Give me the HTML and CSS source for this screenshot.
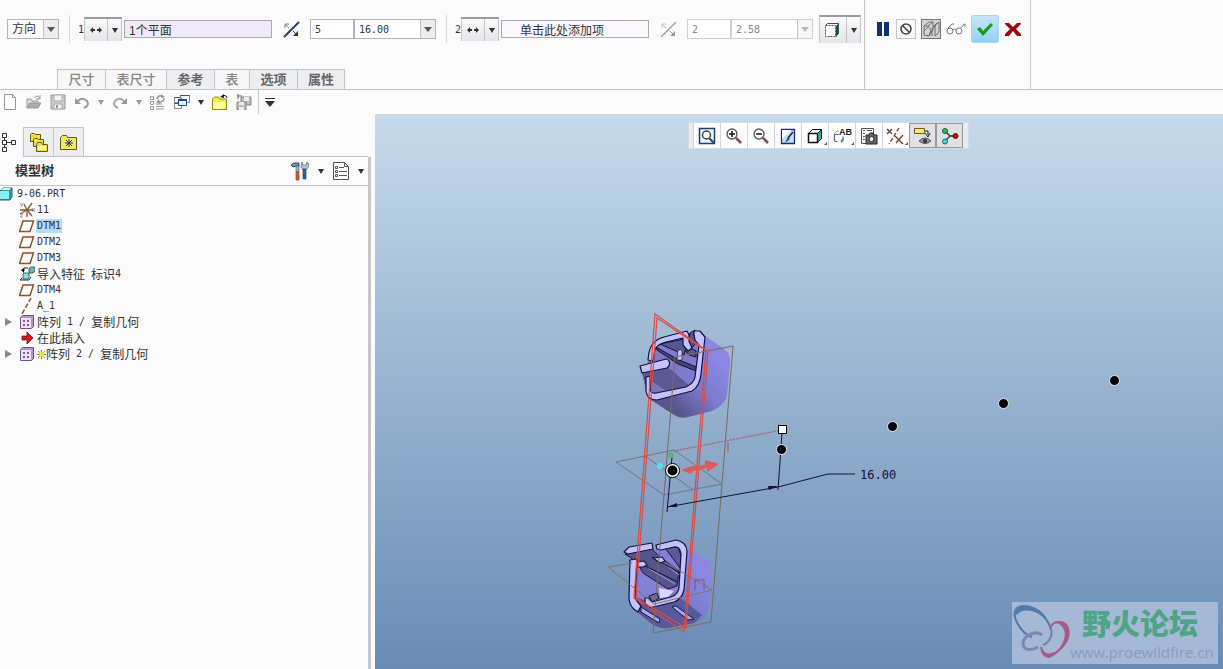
FILE: index.html
```html
<!DOCTYPE html>
<html lang="zh-CN">
<head>
    <meta charset="UTF-8">
    <title>9-06.PRT</title>
    <link rel="stylesheet" href="styles.css">
</head>
<body>

    <header class="ribbon">
        <div class="dashboard">
            <form class="controls">
                <div class="combo type">
                    <select aria-label="类型"><option>方向</option></select>
                </div>
                <span class="sep"></span>
                <div class="group">
                    <label class="num" for="ref1">1</label>
                    <div class="split">
                        <button type="button" aria-label="平移 1"><svg width="14" height="8" viewBox="0 0 14 8"><path d="M1 4l3-3v6zM13 4l-3-3v6z" fill="#333"/><path d="M4 4h2M8 4h2" stroke="#333" stroke-width="2"/></svg></button>
                        <button type="button" class="drop" aria-label="选择平移 1"><i class="arrow"></i></button>
                    </div>
                    <input id="ref1" class="collector filled" type="text" value="1个平面">
                </div>
                <button type="button" class="icon" aria-label="反向 1"><svg width="18" height="18" viewBox="0 0 18 18"><path d="M2 17L17 2" stroke="#26406e" stroke-width="2"/><path d="M3 8V4h4M4 5l3 3" stroke="#777" fill="none"/><path d="M11 11l4 4" stroke="#333"/><path d="M16 11v5h-5z" fill="#333"/></svg></button>
                <div class="group pair">
                    <input class="count" type="text" value="5" aria-label="成员数 1">
                    <div class="combo value"><select aria-label="间距 1"><option>16.00</option></select></div>
                </div>
                <span class="sep"></span>
                <div class="group">
                    <label class="num" for="ref2">2</label>
                    <div class="split">
                        <button type="button" aria-label="平移 2"><svg width="14" height="8" viewBox="0 0 14 8"><path d="M1 4l3-3v6zM13 4l-3-3v6z" fill="#333"/><path d="M4 4h2M8 4h2" stroke="#333" stroke-width="2"/></svg></button>
                        <button type="button" class="drop" aria-label="选择平移 2"><i class="arrow"></i></button>
                    </div>
                    <input id="ref2" class="collector hint" type="text" value="单击此处添加项">
                </div>
                <button type="button" class="icon" aria-label="反向 2" disabled><svg width="18" height="18" viewBox="0 0 18 18"><path d="M2 17L17 2" stroke="#999" stroke-width="1.3"/><path d="M3 8V4h4M4 5l3 3" stroke="#bbb" fill="none"/><path d="M11 11l4 4" stroke="#999"/><path d="M16 11v5h-5z" fill="#999"/></svg></button>
                <div class="group pair">
                    <input class="count" type="text" value="2" aria-label="成员数 2" disabled>
                    <div class="combo value off"><select aria-label="间距 2" disabled><option>2.58</option></select></div>
                </div>
                <div class="split big">
                    <button type="button" aria-label="再生选项"><svg width="18" height="16" viewBox="0 0 18 16"><path d="M12 4l3-3v10l-3 4z" fill="#1f4a4a"/><path d="M1.500 3.500l2-2h11v10l-3 3" fill="none" stroke="#355"/><path d="M1.500 3.500h10v11h-10z" fill="#fff" stroke="#555" stroke-dasharray="2 1"/></svg></button>
                    <button type="button" class="drop" aria-label="更多再生选项"><i class="arrow"></i></button>
                </div>
            </form>
            <nav class="tabs">
                <button type="button" class="w2" disabled>尺寸</button>
                <button type="button" class="w3" disabled>表尺寸</button>
                <button type="button" class="w2">参考</button>
                <button type="button" class="w1" disabled>表</button>
                <button type="button" class="w2">选项</button>
                <button type="button" class="w2">属性</button>
            </nav>
        </div>
        <div class="confirm">
            <button type="button" class="icon" aria-label="暂停"><svg width="18" height="18" viewBox="0 0 18 18"><path d="M4 2h5v14H4zM11 2h5v14h-5z" fill="#123078"/></svg></button>
            <button type="button" class="icon boxed" aria-label="无预览"><svg width="14" height="14" viewBox="0 0 14 14"><circle cx="7" cy="7" r="5" fill="none" stroke="#444" stroke-width="1.600"/><path d="M3.500 3.500l7 7" stroke="#444" stroke-width="1.600"/></svg></button>
            <button type="button" class="icon boxed pressed" aria-label="分离预览"><svg width="18" height="18" viewBox="0 0 18 18"><path d="M2 6l5-4h4l-5 4zM2 6v9l5 1 8-13M6 6l3 4-2 6M11 2v5M13 5l4-3v10l-4 4zM13 5l-3 3v8M2 11l4-4" fill="none" stroke="#555" stroke-width=".8"/></svg></button>
            <button type="button" class="icon" aria-label="校验"><svg width="20" height="14" viewBox="0 0 20 14"><g fill="none" stroke="#777"><circle cx="4" cy="9" r="3"/><circle cx="13" cy="9" r="3"/><path d="M7 8q1.500-2 3 0M2 6l4-4h2M15 6l3-4h1v3"/></g></svg></button>
            <button type="button" class="ok" aria-label="确定"><svg width="20" height="18" viewBox="0 0 20 18"><path d="M2 9l3-2 3 4L16 3l2 2L8 16z" fill="#149a1e"/></svg></button>
            <button type="button" class="icon" aria-label="取消"><svg width="18" height="18" viewBox="0 0 18 18"><path d="M1 3h4l4 4 4-4h4v1l-5 5 5 5v2h-4l-4-5-4 5H1v-2l5-5-5-5z" fill="#9b0710"/></svg></button>
        </div>
    </header>

    <div class="quickbar">
        <button type="button" aria-label="新建"><svg width="16" height="16" viewBox="0 0 16 16"><path d="M2.500.500h8l3 3v12h-11zM10.500.500v3h3" fill="#fff" stroke="#999"/></svg></button>
        <button type="button" aria-label="打开"><svg width="16" height="16" viewBox="0 0 16 16"><path d="M1 14V5h4l1 2h6v2" fill="#ddd" stroke="#999"/><path d="M1 14l3-5h11l-3 5z" fill="#aaa" stroke="#999"/><path d="M8 4q3-4 6 0M14 1v4h-4" fill="none" stroke="#999"/></svg></button>
        <button type="button" aria-label="保存"><svg width="16" height="16" viewBox="0 0 16 16"><path d="M1 1h14v14H1z" fill="#ccc" stroke="#999"/><path d="M4 1h8v6H4z" fill="#f4f4f4" stroke="#aaa"/><path d="M4 10h8v5H4z" fill="#f4f4f4" stroke="#aaa"/><path d="M6 11h2v3H6z" fill="#999"/></svg></button>
        <button type="button" aria-label="撤消"><svg width="16" height="16" viewBox="0 0 16 16"><path d="M3 8q5-6 10-1 3 4-3 7" fill="none" stroke="#999" stroke-width="2"/><path d="M1 4v6h6z" fill="#999"/></svg></button>
        <button type="button" aria-label="撤消列表"><i class="arrow pale"></i></button>
        <button type="button" aria-label="重做"><svg width="16" height="16" viewBox="0 0 16 16"><path d="M13 8Q8 2 3 7q-3 4 3 7" fill="none" stroke="#aaa" stroke-width="2"/><path d="M15 4v6H9z" fill="#999"/></svg></button>
        <button type="button" aria-label="重做列表"><i class="arrow pale"></i></button>
        <button type="button" aria-label="再生"><svg width="16" height="16" viewBox="0 0 16 16"><path d="M.500 2.500h3v3h-3zM.500 7.500h3v3h-3zM.500 12.500h3v3h-3zM6 10h6M6 12.500h8M6 15h8" fill="none" stroke="#999"/><path d="M7 5q1-4 5-3M14 4q0 4-5 4" fill="none" stroke="#999" stroke-width="1.500"/><path d="M11 0l4 3-4 1zM9 5L6 8l4 2z" fill="#999"/></svg></button>
        <button type="button" aria-label="窗口"><svg width="16" height="16" viewBox="0 0 16 16"><path d="M6.500 1.500h9v7h-9zM.500 3.500h7v5h-7zM.500 9.500h7v5h-7z" fill="#fff" stroke="#888"/><path d="M6 1.500h10M0 3.500h6M0 9.500h4" stroke="#555"/><path d="M4.500 5.500h8v6h-8z" fill="#e8f0ff" stroke="#1d4b9b"/><path d="M4 6h9" stroke="#1d4b9b" stroke-width="2"/></svg></button>
        <button type="button" aria-label="窗口列表"><i class="arrow"></i></button>
        <button type="button" aria-label="工作目录"><svg width="16" height="16" viewBox="0 0 16 16"><path d="M.500 15.500V5l2-2h4l1 2h7v10.500z" fill="#f5ee4a" stroke="#8f8a1c"/><path d="M1 8h13v4l-4 3H1z" fill="#fffca0"/><path d="M9 3q3-3 5-1 1 1 1 2" fill="none" stroke="#222"/><path d="M8 3l4-3v4z" fill="#222"/></svg></button>
        <button type="button" aria-label="保存副本"><svg width="16" height="16" viewBox="0 0 16 16"><path d="M5 3h10v8H5z" fill="#bbb" stroke="#888"/><path d="M8 3h5v4H8z" fill="#eee"/><path d="M1 8h9v8H1z" fill="#bbb" stroke="#888"/><path d="M3 8h5v3H3zM3 13h5v3H3z" fill="#eee"/><path d="M1 2h5M2 0v5" stroke="#666"/></svg></button>
        <span class="sep"></span>
        <button type="button" class="custom" aria-label="自定义"><i class="arrow wide"></i></button>
    </div>

    <main class="work">
        <aside class="panel">
            <div class="panel-tabs">
                <button type="button" class="on" aria-label="模型树"><svg width="16" height="20" viewBox="0 0 16 20"><path d="M1.500 1.500h4v4h-4zM1.500 8.500h4v4h-4zM1.500 15.500h4v4h-4zM10.500 8.500h4v4h-4zM3.500 6v2M3.500 13v2M6 10.500h4" fill="none" stroke="#333"/></svg></button>
                <button type="button" aria-label="文件夹浏览器"><svg width="20" height="20" viewBox="0 0 20 20"><g fill="#f0e23c" stroke="#5e5a1c"><path d="M1.500 9.500v-7l1-1h3l1 1h5v7z"/><path d="M4.500 14.500v-7l1-1h3l1 1h5v7z"/><path d="M7.500 19.500v-7l1-2h4l1 2h5v7z"/></g><path d="M9 14h8v3l-2 1H9z" fill="#fff9a0"/></svg></button>
                <button type="button" aria-label="收藏夹"><svg width="18" height="16" viewBox="0 0 18 16"><path d="M.500 15.500v-12l2-2h4l1 2h9v12z" fill="#f7ea57" stroke="#5e5a1c"/><path d="M9 5v8M5 9h8M6 6l6 6M12 6l-6 6" stroke="#15347f"/></svg></button>
            </div>
            <div class="panel-body">
                <div class="panel-head">
                    <h1>模型树</h1>
                    <button type="button" aria-label="设置"><svg width="20" height="20" viewBox="0 0 20 20"><path d="M1 4l3-2h5v3H6L3 6z" fill="#5ca6c6" stroke="#345"/><path d="M6 5h3v6H6z" fill="#a8b4bc" stroke="#456" stroke-width=".6"/><path d="M6 11h3v8H6z" fill="#e2581e" stroke="#733" stroke-width=".6"/><path d="M12 1l1 3h3l1-3 2 2-1 4-2 2h-3l-2-3z" fill="#b7c4cc" stroke="#566" stroke-width=".7"/><path d="M13 8h3v10h-3z" fill="#2966ae" stroke="#234" stroke-width=".6"/></svg></button>
                    <button type="button" aria-label="设置列表"><i class="arrow"></i></button>
                    <button type="button" aria-label="显示"><svg width="18" height="20" viewBox="0 0 18 20"><path d="M1.500 1.500h11l4 4v13h-15zM12.500 1.500v4h4" fill="#fff" stroke="#555"/><path d="M7 6.500h5M7 10.500h8M7 14.500h8" stroke="#555"/><path d="M3.500 5.500h2v2h-2zM3.500 9.500h2v2h-2zM3.500 13.500h2v2h-2z" fill="none" stroke="#555"/></svg></button>
                    <button type="button" aria-label="显示列表"><i class="arrow"></i></button>
                </div>
                <ul class="tree">
                    <li class="root"><svg width="14" height="14" viewBox="0 0 14 14"><path d="M0 4l3-3h9v9l-2 3H0z" fill="#3b97a0" stroke="#266"/><path d="M0 4h9v8H0z" fill="#86f0f0"/><path d="M1 3l2-2h8L9 3z" fill="#c9ffff"/></svg>9-06.PRT</li>
                    <li><svg width="16" height="16" viewBox="0 0 16 16"><path d="M1 8h14M8 8l5-7M8 8L5 2M8 8l5 6M8 8v7M8 8l-7 4" stroke="#8b5a38" stroke-width="1.300"/><path d="M1 1l2 3M4 1L2 5M13 6l3 4M16 6l-3 4M1 12h3l-3 3h3" fill="none" stroke="#888" stroke-width=".8"/></svg>11</li>
                    <li><svg width="16" height="16" viewBox="0 0 16 16"><path d="M.500 13.500L4 3h10.500L11 13.500z" fill="none" stroke="#8b5229" stroke-width="1.500"/></svg><b>DTM1</b></li>
                    <li><svg width="16" height="16" viewBox="0 0 16 16"><path d="M.500 13.500L4 3h10.500L11 13.500z" fill="none" stroke="#8b5229" stroke-width="1.500"/></svg>DTM2</li>
                    <li><svg width="16" height="16" viewBox="0 0 16 16"><path d="M.500 13.500L4 3h10.500L11 13.500z" fill="none" stroke="#8b5229" stroke-width="1.500"/></svg>DTM3</li>
                    <li><svg width="16" height="16" viewBox="0 0 16 16"><path d="M10 2l2-1h4v4l-2 2h-4z" fill="#67b7bb" stroke="#233" stroke-width=".7"/><path d="M4 8l1-1h5v5l-1 1H4z" fill="#7fe0e6" stroke="#233" stroke-width=".7"/><path d="M1 14h9l2-3M1 14l2-2M9 2H5v3" fill="none" stroke="#222"/><path d="M2 4l3-2v5z" fill="#111"/></svg><span>导入特征</span><em> </em><span>标识</span>4</li>
                    <li><svg width="16" height="16" viewBox="0 0 16 16"><path d="M.500 13.500L4 3h10.500L11 13.500z" fill="none" stroke="#8b5229" stroke-width="1.500"/></svg>DTM4</li>
                    <li><svg width="16" height="16" viewBox="0 0 16 16"><path d="M3 16L12 0" stroke="#8b5229" stroke-width="1.500" stroke-dasharray="5 2"/></svg>A_1</li>
                    <li class="closed"><svg width="16" height="16" viewBox="0 0 16 16"><path d="M1.500 3.500l2-2h11v11l-2 2h-11z" fill="#b597cc" stroke="#6d5488"/><path d="M2 4h10v10H2z" fill="#f1e0fa"/><path d="M4 6h2v2H4zM8 6h2v2H8zM4 10h2v2H4zM8 10h2v2H8z" fill="#81619d"/></svg><span>阵列</span> 1 / <span>复制几何</span></li>
                    <li><svg width="16" height="16" viewBox="0 0 16 16"><path d="M3 6h5V2l6 6-6 6v-4H3z" fill="#d6141b" stroke="#701"  stroke-width=".7"/></svg><span>在此插入</span></li>
                    <li class="closed"><svg width="16" height="16" viewBox="0 0 16 16"><path d="M1.500 3.500l2-2h11v11l-2 2h-11z" fill="#b597cc" stroke="#6d5488"/><path d="M2 4h10v10H2z" fill="#f1e0fa"/><path d="M4 6h2v2H4zM8 6h2v2H8zM4 10h2v2H4zM8 10h2v2H8z" fill="#81619d"/></svg><svg class="star" width="9" height="9" viewBox="0 0 8 8"><path d="M4 0v8M0 4h8M1 1l6 6M7 1L1 7" stroke="#77701a" stroke-width=".8"/><path d="M2 2h4v4H2z" fill="#f1ea2a"/></svg><span>阵列</span> 2 / <span>复制几何</span></li>
                </ul>
            </div>
        </aside>

        <section class="view">
            <svg class="scene" viewBox="375 114 848 555" role="img" aria-label="9-06.PRT">
                <defs>
                    <linearGradient id="shade" x1="0.900" y1="0.400" x2="0.400" y2="0.900">
                        <stop offset="0" stop-color="#8a86e2"/>
                        <stop offset=".5" stop-color="#7c7bce"/>
                        <stop offset="1" stop-color="#56568f"/>
                    </linearGradient>
                </defs>

                <!-- upper part -->
                <g stroke-linejoin="round">
                    <path d="M698 331L724 349Q731 354 730 364L727 395Q725 405 712 411L688 417Q680 419 674 415L648 398 642 373 660 341z" fill="url(#shade)"/>
                    <path d="M656 346L698 337 696 382 654 395z" fill="#7d7bce"/>
                    <path d="M644 373L668 367 691 387 656 395 650 391 650 380z" fill="#5a5a96"/>
                    <path d="M651 381L670 393 655 396 650 392z" fill="#7674c2"/>
                    <path d="M660 344L684 339 686 348 684 355 676 351z" fill="#57578f" stroke="#11113a"/>
                    <path d="M656 347L677 359 696 367V371L678 364 657 350z" fill="#45456f" stroke="#11113a"/>
                    <path d="M685 350l6-2 5 3v6l-7-2z" fill="#57578f" stroke="#11113a"/>
                    <path d="M690 333l5-3v14l-4 5-5-3z" fill="#55558c" stroke="#11113a"/>
                    <path d="M678 350h4v10h-5z" fill="#c9c6fb" stroke="#11113a" stroke-width=".6"/>
                    <g fill="#c5c2fb" stroke="#11113a" stroke-width="1.200">
                        <path d="M648 360Q649 349 652 345 656 339 664 337L687 331 689 335V341L692 348 688 351 683 345V338L666 342Q658 344 655 349L653 361z"/>
                        <path d="M694 334V331L700 331 705 337 701 374Q700 386 692 391L657 400Q647 400 646 391V377L650 376V389Q651 394 656 393L686 387Q694 383 695 377L699 345 695 340z"/>
                        <path d="M640 366L666 359Q671 360 669 366L667 368 642 373z"/>
                    </g>
                </g>

                <!-- lower part -->
                <g stroke-linejoin="round">
                    <path d="M684 546L706 559Q713 564 712 572L708 610Q706 619 694 623L668 628Q660 629 652 624L632 608 632 560 665 545z" fill="url(#shade)"/>
                    <path d="M637 562L680 548 680 590 650 603 636 597z" fill="#8381d6"/>
                    <path d="M665 548L678 547 681 556 680 568z" fill="#5a5a98" stroke="#171743"/>
                    <path d="M625 554L652 549 660 557 679 571 677 586 668 589 643 573 637 562z" fill="#55558c" stroke="#171743"/>
                    <path d="M648 568L675 584M662 562L679 575" fill="none" stroke="#9a98e4"/>
                    <path d="M645 566L678 582M652 557L680 573" fill="none" stroke="#11113a"/>
                    <path d="M638 608L682 599 702 615 694 623 668 628 652 624z" fill="#58589a"/>
                    <path d="M672 607l4-1 18 13-6 1zM641 607l19 12-1 4-18-11z" fill="#a9a6ee" stroke="#171743"/>
                    <path d="M659 588L674 591 668 597 660 598z" fill="#dad8ff"/>
                    <path d="M649 596l8-3 2 5-7 4z" fill="#6c6a9c" stroke="#11113a"/>
                    <g fill="#c5c2fb" stroke="#11113a" stroke-width="1.200">
                        <path d="M630 560L637 559 635 598Q637 602 641 606L638 612Q629 607 629 598z"/>
                        <path d="M656 545L676 540Q687 542 687 552L684 590Q682 599 674 602L649 608 645 604V598H649L652 602 671 597Q679 594 679 587L681 554Q680 546 674 547L661 550 657 549z"/>
                        <path d="M624 552L629 547 652 543 653 549 628 554z"/>
                        <path d="M637 562l7-1 3 4-4 2-6 0zM653 558l9-1 3 4-5 2z"/>
                    </g>
                </g>

                <!-- datum planes -->
                <g fill="none" stroke="#7d6a58">
                    <path d="M675 357L733 346 711 622 653 633z"/>
                    <path d="M616 462L674 450 722 484 664 495zM645 456L692 489" stroke="#75757c"/>
                    <path d="M632 563L608 567 654 604 712 590 665 562" stroke="#857463"/>
                    <path d="M695 590V580H704V590" stroke="#6a5a8c"/>
                </g>
                <g fill="none" stroke="#dc4a44" stroke-width="1.200">
                    <path d="M655 314L706 350 684 632 634 598z"/>
                    <path d="M657 318L708 352 686 628 636 598z"/>
                    <path d="M674 451L782 430" stroke="#a35e74" stroke-dasharray="2 1"/>
                    <path d="M728 442V452" stroke="#a35e74"/>
                </g>

                <!-- dimension -->
                <path d="M672 457L667 512M782 433L778 490M667 507L778 487 828 474H855" fill="none" stroke="#11113a"/>
                <path d="M667 507l10-4v4zM778 486l-10 0 1 4z" fill="#11113a"/>
                <text class="dim" x="860" y="479">16.00</text>

                <path d="M681 470l11-4 13-1v-5l14 4-12 8v-4l-14 3-2 3z" fill="#dc5a58"/>
                <circle cx="660" cy="466" r="3" fill="#4be6f5"/>
                <circle cx="671" cy="455" r="3" fill="#56b575"/>
                <circle cx="672.500" cy="470.500" r="7" fill="#fff" stroke="#000"/>
                <circle cx="672.500" cy="470.500" r="5"/>
                <path d="M778.500 425.500h8v8h-8z" fill="#fff" stroke="#000"/>
                <g stroke="#e8eef5">
                    <circle cx="781.500" cy="449.500" r="5"/>
                    <circle cx="892.500" cy="426.500" r="5"/>
                    <circle cx="1003.500" cy="403.500" r="5"/>
                    <circle cx="1114.500" cy="380.500" r="5"/>
                </g>
            </svg>

            <div class="viewbar">
                <button type="button" aria-label="重新调整"><svg width="18" height="18" viewBox="0 0 18 18"><path d="M1.500 1.500h15v15h-15z" fill="#eef4ff" stroke="#1f3c78" stroke-width="1.500"/><circle cx="8.500" cy="8" r="4" fill="#fff" stroke="#444" stroke-width="1.500"/><path d="M11 11l5 5" stroke="#444" stroke-width="2"/></svg></button>
                <button type="button" aria-label="放大"><svg width="18" height="18" viewBox="0 0 18 18"><circle cx="7" cy="7" r="5" fill="#fff" stroke="#555" stroke-width="1.300"/><path d="M4 7h6M7 4v6" stroke="#111" stroke-width="1.500"/><path d="M11 11l5 5" stroke="#7a5146" stroke-width="2.500"/></svg></button>
                <button type="button" aria-label="缩小"><svg width="18" height="18" viewBox="0 0 18 18"><circle cx="7" cy="7" r="5" fill="#fff" stroke="#555" stroke-width="1.300"/><path d="M4 7h6" stroke="#111" stroke-width="1.500"/><path d="M11 11l5 5" stroke="#7a5146" stroke-width="2.500"/></svg></button>
                <button type="button" aria-label="重画"><svg width="18" height="18" viewBox="0 0 18 18"><path d="M2.500 2.500h13v14h-13z" fill="#c7dcfa" stroke="#16336f" stroke-width="1.300"/><path d="M3 3h9L3 12z" fill="#fff"/><path d="M14 5l-5 6" stroke="#222" stroke-width="1.500"/><path d="M9 10l2 2-5 4z" fill="#26426e"/></svg></button>
                <button type="button" class="more" aria-label="显示样式"><svg width="18" height="18" viewBox="0 0 18 18"><path d="M2.500 6.500l4-4h9v9l-4 4z" fill="#38ae98" stroke="#111"/><path d="M2.500 6.500l4-4h9l-4 4z" fill="#fff" stroke="#111"/><path d="M2.500 6.500h9v9h-9z" fill="#fff" stroke="#111" stroke-width="1.500"/></svg></button>
                <button type="button" class="more" aria-label="命名视图"><svg width="20" height="18" viewBox="0 0 20 18"><path d="M2.500 14V7.500h4M2.500 14.500h3M11 9.500v4l-2 2" fill="none" stroke="#667" stroke-width="1.200"/><path d="M2 7l3-3h2" fill="none" stroke="#999"/><path d="M8 14l4-4v4z" fill="#55a7a0"/><text class="ab" x="7" y="8">AB</text></svg></button>
                <button type="button" aria-label="视图管理器"><svg width="18" height="18" viewBox="0 0 18 18"><path d="M1.500 1.500h12v15h-12z" fill="#fff" stroke="#555"/><path d="M3 3.500h2M7 3.500h5M3 6.500h2M3 9.500h2M3 12.500h2" stroke="#555"/><path d="M6 8h3l1-2h3l1 2h3v9H6z" fill="#666" stroke="#222"/><circle cx="11.500" cy="12" r="2.500" fill="#fff" stroke="#222"/></svg></button>
                <button type="button" class="more" aria-label="基准显示"><svg width="20" height="18" viewBox="0 0 20 18"><g stroke="#6e3c2a" stroke-width="1.300"><path d="M1 2l5 5M6 2L1 7M9 9l8 8M17 8l-7 8"/><path d="M13 1L3 17" stroke-dasharray="4 2"/></g></svg></button>
                <button type="button" class="down" aria-label="注释显示"><svg width="20" height="18" viewBox="0 0 20 18"><path d="M1.500 1.500h10v5h-10z" fill="#f6ec6d" stroke="#665e1a"/><path d="M12 4h3v4M12 6l3 4 2-4" fill="none" stroke="#222"/><path d="M6 14q6-6 12 0-6 5-12 0z" fill="#999" stroke="#555"/><circle cx="12" cy="14" r="2" fill="#333"/></svg></button>
                <button type="button" class="down" aria-label="旋转中心"><svg width="18" height="18" viewBox="0 0 18 18"><path d="M4 4l5 5h5M9 9l-5 5" fill="none" stroke="#333" stroke-width="1.300"/><circle cx="4" cy="4" r="2.500" fill="#2ebc4a" stroke="#164"/><circle cx="14.500" cy="9" r="2.500" fill="#b91822" stroke="#611"/><circle cx="4" cy="14.500" r="2.500" fill="#4fd2d8" stroke="#266"/></svg></button>
            </div>

            <div class="watermark">
                <svg width="58" height="58" viewBox="0 0 58 58" fill="none">
                    <path d="M20 35C8 31-2 12 5 6c10-7 31 7 34 22" stroke="#5379a8" stroke-width="2"/>
                    <path d="M4 12C7-1 26 4 34 17 26 7 11 4 4 12z" fill="#5379a8" stroke="#5379a8" stroke-width="2"/>
                    <path d="M39 25c2-6 12-7 16 1 3 10-4 22-18 29-5 0-7-4-8-10" stroke="#a75b83" stroke-width="2"/>
                    <path d="M46 20c14-1 14 18 2 27 7-9 9-21-2-27zM30 48q4 7 12 3-6 7-12-3z" fill="#a75b83" stroke="#a75b83" stroke-width="2"/>
                    <path d="M30 33c-6-5-18 0-19 8 0 6 6 9 15 4" stroke="#7989b1" stroke-width="3"/>
                    <path d="M39 27c2 6-2 14-8 16" stroke="#6f85ae" stroke-width="2"/>
                </svg>
                <div class="site"><strong>野火论坛</strong><span>www.proewildfire.cn</span></div>
            </div>
        </section>
    </main>

</body>
</html>
```
FILE: styles.css
```css
* {
    box-sizing: border-box;
}

body {
    margin: 0;
    min-height: 100vh;
    display: flex;
    flex-direction: column;
    background-color: #fbfbfb;
    color: #333;
    font-family: "DejaVu Sans Mono", "Noto Sans CJK SC", monospace;
    font-size: 12px;
}

button, input, select {
    margin: 0;
    padding: 0;
    border: 0;
    background: none;
    color: inherit;
    font-family: "Liberation Sans", "Noto Sans CJK SC", sans-serif;
    font-size: 12px;
}

svg {
    display: block;
    flex: none;
}

.arrow {
    display: block;
    border: 3px solid transparent;
    border-top: 5px solid #333;
    border-bottom: 0;
}

.arrow.pale {
    border-top-color: #999;
}

.arrow.wide {
    position: relative;
    border-width: 6px 5px 0;
}

.arrow.wide::before {
    content: "";
    position: absolute;
    left: -5px;
    top: -9px;
    width: 10px;
    height: 1px;
    background-color: #333;
}

/* ribbon */
.ribbon {
    display: flex;
    border-bottom: 1px solid #c3c3c8;
}

.dashboard {
    padding-right: 3px;
    border-right: 1px solid #c3c3c8;
}

.controls {
    display: flex;
    align-items: center;
    gap: 10px;
    height: 58px;
    padding-left: 7px;
}

.sep {
    width: 1px;
    height: 28px;
    background-color: #d8d8dc;
}

.group {
    display: flex;
    align-items: center;
    gap: 2px;
}

.group.pair {
    gap: 0;
}

.num {
    width: 6px;
    margin-left: -2px;
    margin-right: -2px;
    font-size: 10px;
}

.combo {
    position: relative;
    height: 20px;
    border: 1px solid #b3b3bb;
    background-color: #fff;
}

.combo.type {
    width: 52px;
    background-color: #fbfbfb;
}

.combo.value {
    width: 82px;
}

.combo select {
    appearance: none;
    width: 100%;
    height: 18px;
    padding-left: 4px;
}

.combo.value select, .count {
    font-family: "DejaVu Sans Mono", monospace;
    font-size: 10px;
}

.combo::before {
    content: "";
    position: absolute;
    right: 0;
    top: 0;
    width: 14px;
    height: 18px;
    border-left: 1px solid #c3c3c8;
    background-color: #ededf0;
    pointer-events: none;
}

.combo::after {
    content: "";
    position: absolute;
    right: 3px;
    top: 7px;
    border: 4px solid transparent;
    border-top: 5px solid #555;
    border-bottom: 0;
    pointer-events: none;
}

.combo.off {
    border-color: #cfcfd4;
    color: #888;
}

.combo.off select, .count:disabled {
    color: #888;
    opacity: 1;
}

.combo.off::before {
    background-color: #f7f7f8;
}

.combo.off::after {
    border-top-color: #bbb;
}

.count {
    width: 44px;
    height: 20px;
    padding-left: 4px;
    border: 1px solid #b3b3bb;
    background-color: #fff;
}

.count:disabled {
    border-color: #cfcfd4;
}

.collector {
    width: 148px;
    height: 18px;
    padding-left: 4px;
    border: 1px solid #a9a9b0;
}

.collector.filled {
    background-color: #efe9fa;
}

.collector.hint {
    padding-left: 18px;
    background-color: #faf7ff;
}

.split {
    display: flex;
    width: 38px;
    height: 24px;
    border: 1px solid #c3c3c8;
    border-top: 2px solid #9a9aa0;
    border-bottom: 0;
    background-image: linear-gradient(#fbfbfb, #e4e4ea);
}

.split button {
    flex: 1;
    display: flex;
    align-items: center;
    justify-content: center;
}

.split .drop {
    flex: none;
    width: 14px;
    border-left: 1px solid #c3c3c8;
}

.split.big {
    width: 42px;
    height: 28px;
    margin-left: -4px;
}

.icon {
    display: flex;
    align-items: center;
    justify-content: center;
    min-width: 18px;
    height: 20px;
}

.tabs {
    display: flex;
    margin-top: 11px;
    padding-left: 57px;
}

.tabs button {
    height: 20px;
    border: 1px solid #c3c3c8;
    border-right-width: 0;
    border-bottom: 0;
    background-color: #eceef1;
    color: #666;
    font-size: 13px;
    font-weight: bold;
    line-height: 18px;
}

.tabs button:disabled {
    background-color: #f7f7f8;
    color: #858585;
    font-weight: 500;
}

.tabs button:last-child {
    border-right-width: 1px;
}

.tabs .w1 {
    width: 35px;
}

.tabs .w2 {
    width: 48px;
}

.tabs .w3 {
    width: 61px;
}

.confirm {
    display: flex;
    align-items: center;
    gap: 5px;
    height: 89px;
    padding: 0 8px 31px;
    border-right: 1px solid #c3c3c8;
}

.confirm .boxed {
    width: 20px;
    border: 1px solid #c3c3c8;
}

.confirm .pressed {
    border-color: #777;
    background-color: #d2d2d6;
}

.ok {
    display: flex;
    align-items: center;
    justify-content: center;
    width: 28px;
    height: 28px;
    border: 1px solid #a8d6f2;
    border-radius: 2px;
    background-image: linear-gradient(#c6e6fa, #93cff5);
}

/* quick access */
.quickbar {
    display: flex;
    align-items: center;
    gap: 8px;
    height: 24px;
    padding-left: 2px;
}

.quickbar .sep {
    height: 24px;
    margin: 0 -2px;
    background-color: #c3c3c8;
}

.custom {
    padding-top: 4px;
}

/* model tree */
.work {
    flex: 1;
    display: flex;
}

.panel {
    display: flex;
    flex-direction: column;
    width: 375px;
    padding: 13px 4px 0 0;
}

.panel-tabs {
    display: flex;
    width: 368px;
    height: 30px;
}

.panel-tabs::after {
    content: "";
    flex: 1;
    border-bottom: 1px solid #c3c3c8;
}

.panel-tabs button {
    display: flex;
    align-items: center;
    justify-content: center;
    width: 30px;
    border: 1px solid #c3c3c8;
    border-left: 0;
    background-color: #eceef1;
}

.panel-tabs .on {
    width: 24px;
    padding-right: 6px;
    border-top: 0;
    border-bottom: 0;
    background: none;
}

.panel-body {
    flex: 1;
    border-right: 3px solid #c6c6cc;
}

.panel-head {
    display: flex;
    align-items: center;
    gap: 8px;
    height: 29px;
    padding: 0 4px 0 15px;
    border-bottom: 1px solid #c3c3c8;
}

.panel-head h1 {
    flex: 1;
    margin: 0;
    font-size: 13px;
    line-height: 18px;
}

.tree {
    margin: 0;
    padding: 0;
    list-style: none;
    font-size: 10px;
}

.tree li {
    position: relative;
    display: flex;
    align-items: center;
    height: 16px;
    padding-left: 19px;
    line-height: 16px;
    white-space: pre;
}

.tree svg {
    margin-right: 2px;
}

.tree .star {
    margin-right: 0;
}

.tree .root {
    padding-left: 0;
}

.tree .root svg {
    margin-right: 3px;
}

.tree span {
    font-family: "Noto Sans CJK SC", sans-serif;
    font-size: 12px;
}

.tree b {
    height: 14px;
    padding: 0 1px;
    margin-left: -1px;
    background-color: #b4dcf5;
    font-weight: normal;
    line-height: 14px;
}

.tree .closed::before {
    content: "";
    position: absolute;
    left: 5px;
    top: 4px;
    border: 4px solid transparent;
    border-left: 7px solid #8a8a8a;
    border-right: 0;
}

/* graphics window */
.view {
    flex: 1;
    position: relative;
    min-width: 0;
    overflow: hidden;
    background-image: linear-gradient(#c6daea, #698bb5);
}

.scene {
    width: 100%;
    height: 100%;
}

.dim {
    font-family: "DejaVu Sans Mono", monospace;
    font-size: 12px;
    fill: #11113a;
}

.ab {
    font-family: "Liberation Sans", sans-serif;
    font-size: 9px;
    font-weight: bold;
    fill: #222;
}

.viewbar {
    position: absolute;
    left: 313px;
    top: 8px;
    display: flex;
    height: 27px;
    padding: 0 5px 0 4px;
    border: 1px solid #d6dce2;
    background-color: #e8ecf0;
}

.viewbar button {
    position: relative;
    display: flex;
    align-items: center;
    justify-content: center;
    width: 27px;
    border-left: 1px solid #d0d3d8;
    background-color: #fdfdfd;
}

.viewbar .down {
    border: 1px solid #999;
    background-color: #dfe1e4;
}

.viewbar .more::after {
    content: "";
    position: absolute;
    right: 1px;
    bottom: 3px;
    border-left: 3px solid transparent;
    border-bottom: 3px solid #555;
}

.watermark {
    position: absolute;
    right: 5px;
    bottom: 5px;
    display: flex;
    width: 206px;
    height: 62px;
    background-color: #a5b8d6;
}

.site {
    display: flex;
    flex-direction: column;
    white-space: nowrap;
}

.site strong {
    padding-left: 12px;
    color: #4da487;
    font-family: "Noto Sans CJK SC", sans-serif;
    font-size: 29px;
    font-weight: 900;
    line-height: 40px;
}

.site span {
    color: #829dc4;
    font-family: "Open Sans", sans-serif;
    font-size: 15px;
    line-height: 20px;
}
```
